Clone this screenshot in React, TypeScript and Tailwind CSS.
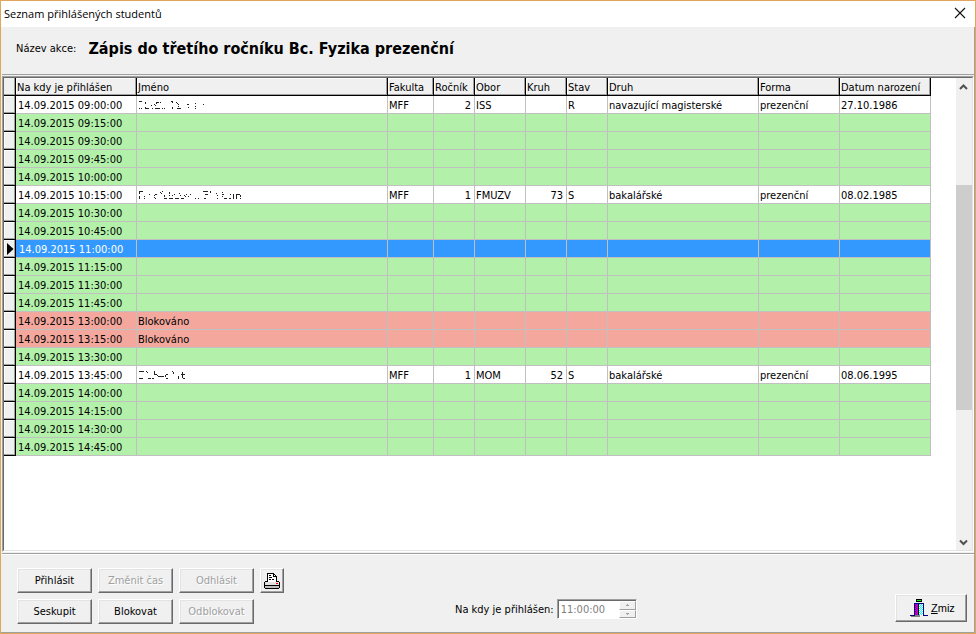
import { useState } from 'react';

type Row = {
  time: string;
  kind: 'free' | 'taken' | 'blocked';
  name?: string;
  scribble?: string;
  cells?: string[];
};

const columns = [
  { label: 'Na kdy je přihlášen', width: 'w-[121px]' },
  { label: 'Jméno', width: 'w-[251px]' },
  { label: 'Fakulta', width: 'w-[46px]' },
  { label: 'Ročník', width: 'w-[41px]' },
  { label: 'Obor', width: 'w-[51px]' },
  { label: 'Kruh', width: 'w-[41px]' },
  { label: 'Stav', width: 'w-[41px]' },
  { label: 'Druh', width: 'w-[151px]' },
  { label: 'Forma', width: 'w-[81px]' },
  { label: 'Datum narození', width: 'w-[91px]' },
];

const rightAligned = [1, 3];

// Anonymised names, only scraps of the letters are left
const scribbles = {
  first: 'M1 2h3M1 9h1M3 9h1M7 3h1M7 4h1M7 8h1M7 9h4M13 6h1M14 9h1M16 5h1M18 3h3M18 4h1M17 6h1M17 9h5M22 3h1M24 9h1M26 9h1M33 2h2M34 3h1M34 8h1M34 9h1M38 3h1M39 4h1M40 5h1M40 7h1M39 9h4M49 5h2M50 8h1M57 4h1M57 7h1M57 9h1M65 5h1',
  second: 'M1 2h4M1 3h1M1 4h1M1 7h1M1 8h1M1 9h1M6 7h1M6 9h1M11 5h1M17 5h2M16 6h1M16 8h1M17 9h1M22 3h1M23 4h1M24 2h1M26 6h1M26 7h1M26 9h3M31 3h1M31 4h1M31 6h1M31 9h4M34 6h1M36 5h1M37 9h4M41 4h1M42 6h1M43 9h3M46 6h1M47 7h1M48 5h1M50 7h1M52 5h1M57 9h1M60 9h1M65 2h5M67 5h3M66 9h2M72 2h1M72 3h1M78 4h1M79 6h1M79 9h1M84 3h1M84 5h2M84 7h1M86 9h3M92 5h1M91 9h2M95 5h1M95 6h1M95 7h1M95 8h1M95 9h1M98 5h4M98 6h1M98 7h1M98 8h1M98 9h1M102 6h1M102 7h1M102 9h1',
  third: 'M1 2h5M1 9h4M8 2h1M9 3h1M10 9h3M14 9h2M16 2h1M16 3h1M16 4h1M16 5h3M19 6h1M20 7h6M28 5h2M27 6h1M27 7h1M28 9h2M34 2h1M35 3h1M35 4h1M40 7h1M40 8h1M40 9h1M44 3h1M44 4h1M43 5h4M44 6h1M44 7h1M44 8h1M45 9h2',
};

const rows: Row[] = [
  { time: '09:00:00', kind: 'taken', scribble: scribbles.first, cells: ['MFF', '2', 'ISS', '', 'R', 'navazující magisterské', 'prezenční', '27.10.1986'] },
  { time: '09:15:00', kind: 'free' },
  { time: '09:30:00', kind: 'free' },
  { time: '09:45:00', kind: 'free' },
  { time: '10:00:00', kind: 'free' },
  { time: '10:15:00', kind: 'taken', scribble: scribbles.second, cells: ['MFF', '1', 'FMUZV', '73', 'S', 'bakalářské', 'prezenční', '08.02.1985'] },
  { time: '10:30:00', kind: 'free' },
  { time: '10:45:00', kind: 'free' },
  { time: '11:00:00', kind: 'free' },
  { time: '11:15:00', kind: 'free' },
  { time: '11:30:00', kind: 'free' },
  { time: '11:45:00', kind: 'free' },
  { time: '13:00:00', kind: 'blocked', name: 'Blokováno' },
  { time: '13:15:00', kind: 'blocked', name: 'Blokováno' },
  { time: '13:30:00', kind: 'free' },
  { time: '13:45:00', kind: 'taken', scribble: scribbles.third, cells: ['MFF', '1', 'MOM', '52', 'S', 'bakalářské', 'prezenční', '08.06.1995'] },
  { time: '14:00:00', kind: 'free' },
  { time: '14:15:00', kind: 'free' },
  { time: '14:30:00', kind: 'free' },
  { time: '14:45:00', kind: 'free' },
];

const rowColors = {
  free: 'bg-[#b3f0aa]',
  taken: 'bg-white',
  blocked: 'bg-[#f4a79d]',
};

const raised =
  'border border-t-white border-l-white border-r-[#696969] border-b-[#696969] bg-[#f0f0f0] shadow-[inset_-1px_-1px_#a0a0a0,inset_1px_1px_#e3e3e3]';

const spin =
  'flex flex-1 items-center justify-center border border-t-white border-l-white border-r-[#a0a0a0] border-b-[#a0a0a0] bg-[#f0f0f0]';

function Button({ label, disabled }: { label: string; disabled?: boolean }) {
  return (
    <button
      type="button"
      disabled={disabled}
      className={`h-[25px] w-[75px] ${raised} disabled:text-[#a0a0a0] disabled:[text-shadow:1px_1px_#fff]`}
    >
      {label}
    </button>
  );
}

function PrinterIcon() {
  return (
    <svg width="16" height="16" viewBox="0 0 16 16" shapeRendering="crispEdges" aria-hidden="true">
      <path d="M3 0h7v1h1v1h1v1h1v6H3z" fill="#000" />
      <path d="M4 1h5v3h3v5H4z" fill="#fff" />
      <path d="M10 2h1v1h-1z" fill="#fff" />
      <path d="M5 2h2v1H5zM5 4h3v1H5zM5 6h2v1H5zM8 6h2v1H8z" fill="#000" />
      <path d="M1 8h14v1h1v6h-1v1H1v-1H0V9h1z" fill="#000" />
      <path d="M1 9h14v3H1z" fill="#e3e3e3" />
      <path d="M4 8h8v1H4z" fill="#fff" />
      <path d="M12 10h2v1h-2z" fill="#f00" />
      <path d="M1 13h14v2H1z" fill="#c0c0c0" />
    </svg>
  );
}

function DoorIcon() {
  const lines = [5, 6, 7, 8, 9, 10, 11, 12, 13, 14, 15];
  return (
    <svg width="18" height="18" viewBox="0 0 18 18" shapeRendering="crispEdges" className="shrink-0" aria-hidden="true">
      <path d="M6 0h6v3H6z" fill="#000" />
      <path d="M7 1h4v1H7z" fill="#0f0" />
      <path d="M4 4h10v12h4v1h-5V5H5v12H0v-1h4z" fill="#000080" />
      <path d="M5 5h3v11H5z" fill="#d000d0" />
      <path d="M9 5h4v11H9z" fill="#0ff" />
      {lines.map((y) => (
        <g key={y}>
          <rect x={5 + (y % 2)} y={y} width="1" height="1" fill="#800080" />
          <rect x={9 + (y % 2)} y={y} width="1" height="1" fill="#fff" />
          <rect x={11 + (y % 2)} y={y} width="1" height="1" fill="#fff" />
        </g>
      ))}
      <path d="M8 5h1v12H8z" fill="#000" />
      <path d="M5 16h5v1H5zM1 17h9v1H1z" fill="#808080" />
    </svg>
  );
}

export default function App() {
  const [selected, setSelected] = useState(8);

  return (
    <div className="flex h-screen flex-col border border-[#dfa65c] bg-[#f0f0f0] font-['DejaVu_Sans_Condensed','Liberation_Sans',sans-serif] text-[11px] leading-[13px] text-black">
      <header className="flex h-[26px] shrink-0 items-center justify-between bg-white pr-[9px] pb-[2px] pl-[3px] font-['Open_Sans',sans-serif]">
        <h1>Seznam přihlášených studentů</h1>
        <button type="button" aria-label="Zavřít">
          <svg width="12" height="12" viewBox="0 0 12 12" aria-hidden="true">
            <path d="M1 1l10 10M11 1L1 11" stroke="#111" strokeWidth="1.1" />
          </svg>
        </button>
      </header>

      <div className="flex min-h-0 flex-1 flex-col border-r border-b border-[#a0a0a0] pl-px">
        <div className="flex h-[48px] shrink-0 items-center border-b border-[#a0a0a0] pb-1 pl-[14px]">
          <span>Název akce:</span>
          <h2 className="ml-3 text-[16px] leading-5 font-bold">Zápis do třetího ročníku Bc. Fyzika prezenční</h2>
        </div>

        <main className="mt-px flex min-h-0 flex-1 border border-[#a0a0a0] border-r-white border-b-white">
          <div className="flex min-w-0 flex-1 border border-[#696969] border-r-[#e3e3e3] border-b-[#e3e3e3] bg-white">
            <div className="min-w-0 flex-1 overflow-hidden">
              <table className="w-[927px] table-fixed border-separate border-spacing-0">
                <thead>
                  <tr className="h-[18px]">
                    <th className="w-[12px] border-r border-b border-black bg-[#f0f0f0] p-0 shadow-[inset_-1px_-1px_#a0a0a0]" />
                    {columns.map((col) => (
                      <th
                        key={col.label}
                        className={`${col.width} border-r border-b border-black bg-[#f0f0f0] p-0 pt-px pl-px text-left font-normal whitespace-nowrap shadow-[inset_-1px_-1px_#a0a0a0,inset_1px_1px_#fff]`}
                      >
                        {col.label}
                      </th>
                    ))}
                  </tr>
                </thead>
                <tbody>
                  {rows.map((row, index) => {
                    const active = index === selected;
                    const cell = 'border-r border-b border-[#c0c0c0] p-0 pt-px whitespace-nowrap overflow-hidden';
                    return (
                      <tr
                        key={row.time}
                        onClick={() => setSelected(index)}
                        className={`h-[18px] ${active ? 'bg-[#3399ff] text-white' : rowColors[row.kind]}`}
                      >
                        <td className="border-r border-b border-black bg-[#f0f0f0] p-0 shadow-[inset_-1px_-1px_#a0a0a0,inset_1px_1px_#fff]">
                          {active && (
                            <svg width="7" height="12" viewBox="0 0 7 12" className="ml-[3px]" aria-hidden="true">
                              <path d="M0 0l6.5 6L0 12z" fill="#000" />
                            </svg>
                          )}
                        </td>
                        <td className={`${cell} ${active ? 'pl-[3px]' : 'pl-[2px]'}`}>14.09.2015 {row.time}</td>
                        <td className={`${cell} pl-px`}>
                          {row.name}
                          {row.scribble && (
                            <svg width="112" height="12" viewBox="0 -0.5 112 12" shapeRendering="crispEdges" aria-hidden="true">
                              <path d={row.scribble} stroke="#222" strokeWidth="1" />
                            </svg>
                          )}
                        </td>
                        {columns.slice(2).map((col, i) => (
                          <td
                            key={col.label}
                            className={`${cell} ${rightAligned.includes(i) ? 'pr-[3px] text-right' : 'pl-px'}`}
                          >
                            {row.cells?.[i]}
                          </td>
                        ))}
                      </tr>
                    );
                  })}
                </tbody>
              </table>
            </div>

            <div className="flex w-4 shrink-0 flex-col items-center bg-[#f0f0f0]">
              <svg width="16" height="17" viewBox="0 0 16 17" className="shrink-0" aria-hidden="true">
                <path d="M4 11l3.500-3.500 3.500 3.500" fill="none" stroke="#505050" strokeWidth="2" />
              </svg>
              <div className="mt-[90px] h-[225px] w-full bg-[#cdcdcd]" />
              <svg width="16" height="17" viewBox="0 0 16 17" className="mt-auto shrink-0" aria-hidden="true">
                <path d="M4 7.500l3.500 3.500 3.500-3.500" fill="none" stroke="#505050" strokeWidth="2" />
              </svg>
            </div>
          </div>
        </main>

        <footer className="mt-px flex h-[79px] shrink-0 items-end border-t border-[#a0a0a0] pr-[7px] pb-2 pl-[15px] shadow-[inset_0_1px_#fff]">
          <div className="flex gap-[6px]">
            <div className="grid grid-cols-3 gap-[6px]">
              <Button label="Přihlásit" />
              <Button label="Změnit čas" disabled />
              <Button label="Odhlásit" disabled />
              <Button label="Seskupit" />
              <Button label="Blokovat" />
              <Button label="Odblokovat" disabled />
            </div>
            <button type="button" aria-label="Tisk" className={`flex h-[25px] w-[24px] items-center justify-center ${raised}`}>
              <PrinterIcon />
            </button>
          </div>

          <div className="mb-[5px] ml-[171px] flex items-center">
            <label htmlFor="cas" className="mr-[3px]">Na kdy je přihlášen:</label>
            <div className="flex h-[20px] w-[80px] border border-[#a0a0a0] border-r-white border-b-white bg-white shadow-[inset_1px_1px_#696969]">
              <input id="cas" disabled defaultValue="11:00:00" className="min-w-0 flex-1 bg-transparent pl-[3px] text-[#808080]" />
              <div className="mt-px flex w-[17px] flex-col">
                <button type="button" disabled aria-label="Více" className={spin}>
                  <svg width="3" height="2" viewBox="0 0 3 2" shapeRendering="crispEdges"><path d="M1 0h1v1h1v1H0V1h1z" fill="#a0a0a0" /></svg>
                </button>
                <button type="button" disabled aria-label="Méně" className={spin}>
                  <svg width="3" height="2" viewBox="0 0 3 2" shapeRendering="crispEdges"><path d="M0 0h3v1H2v1H1V1H0z" fill="#a0a0a0" /></svg>
                </button>
              </div>
            </div>
          </div>

          <button
            type="button"
            className={`mb-[2px] ml-auto flex h-[28px] w-[72px] items-center gap-[3px] pl-[14px] font-['Liberation_Sans',sans-serif] ${raised}`}
          >
            <DoorIcon />
            <span><u>Z</u>miz</span>
          </button>
        </footer>
      </div>
    </div>
  );
}
